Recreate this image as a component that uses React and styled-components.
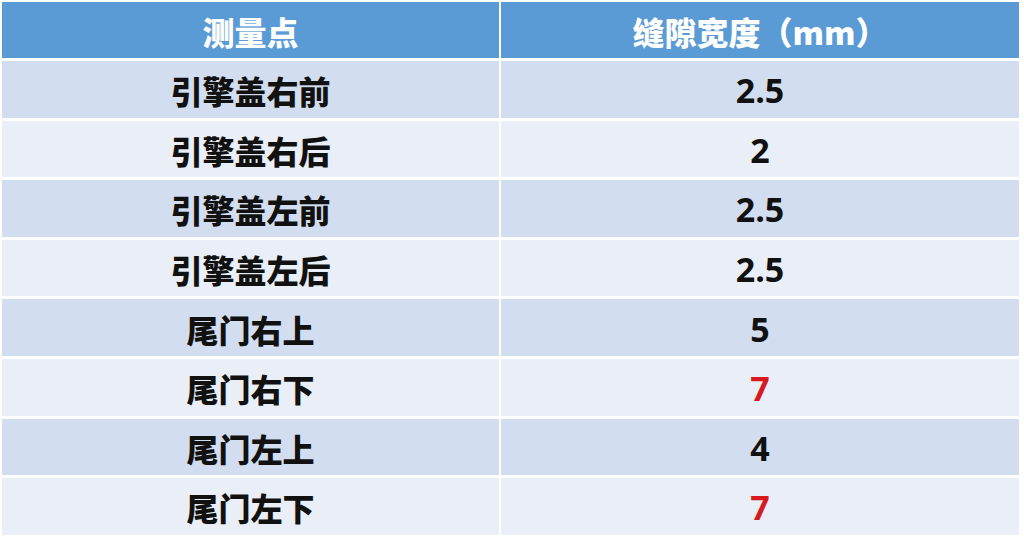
import React from "react";
import styled, { createGlobalStyle } from "styled-components";

const Global = createGlobalStyle`
  html, body { margin: 0; padding: 0; background: #ffffff; }
  body { font-family: "Noto Sans CJK SC", "Noto Sans", sans-serif; }
`;

const Page = styled.div`
  width: 1024px;
  height: 546px;
  padding: 2px 0 0 2px;
  box-sizing: border-box;
  background: #ffffff;
`;

const Table = styled.div`
  display: grid;
  width: 1017px;
  grid-template-columns: 497px 518px;
  grid-template-rows: 56px repeat(8, 56.6px);
  column-gap: 2px;
  row-gap: 3px;
`;

const Cell = styled.div`
  display: flex;
  align-items: center;
  justify-content: center;
  font-size: 32px;
  font-weight: 900;
  line-height: 1;
  background: ${(p) => (p.$head ? "#5b9bd5" : p.$odd ? "#d2deef" : "#eaeff7")};
  color: ${(p) => (p.$head ? "#ffffff" : p.$red ? "#d71920" : "#111111")};
  padding-top: 2px;
  box-sizing: border-box;
`;

const Num = styled.span`
  font-family: "Open Sans", "Noto Sans", sans-serif;
  font-weight: 700;
  font-size: 34px;
`;

const rows = [
  ["引擎盖右前", "2.5"],
  ["引擎盖右后", "2"],
  ["引擎盖左前", "2.5"],
  ["引擎盖左后", "2.5"],
  ["尾门右上", "5"],
  ["尾门右下", "7", true],
  ["尾门左上", "4"],
  ["尾门左下", "7", true],
];

export default function App() {
  return (
    <>
      <Global />
      <Page>
        <Table>
          <Cell $head>测量点</Cell>
          <Cell $head>缝隙宽度（mm）</Cell>
          {rows.map(([name, val, red], i) => (
            <React.Fragment key={i}>
              <Cell $odd={i % 2 === 0}>{name}</Cell>
              <Cell $odd={i % 2 === 0} $red={red}>
                <Num>{val}</Num>
              </Cell>
            </React.Fragment>
          ))}
        </Table>
      </Page>
    </>
  );
}
